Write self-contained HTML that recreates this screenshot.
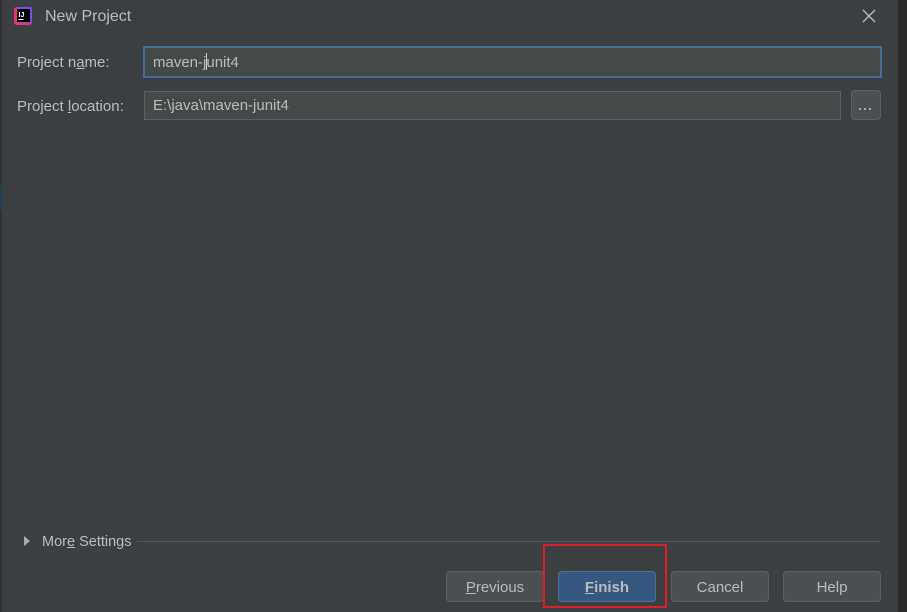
<!DOCTYPE html>
<html><head><meta charset="utf-8"><style>
body{margin:0;width:907px;height:612px;background:#3c3f41;position:relative;overflow:hidden;font-family:"Liberation Sans","Noto Sans CJK SC",sans-serif;color:#bbbbbb;font-size:15px}
.a{position:absolute}
.lbl{font-size:15px;color:#bbbbbb}
.field{background:#45494a;border:1px solid #5e6060;box-sizing:border-box;color:#bbbbbb;padding-left:8px;line-height:28px}
.btn{position:absolute;top:571px;height:31px;border:1px solid #5e6162;border-radius:4px;background:#4c5052;box-sizing:border-box;text-align:center;line-height:31px;color:#bbbbbb;font-size:15px}
u{text-decoration:underline}
</style></head><body>
<div class="a" style="left:0;top:0;width:2px;height:612px;background:#2f3133"></div>
<div class="a" style="left:0;top:185px;width:2px;height:25px;background:#1f4257"></div>
<div class="a" style="left:898px;top:0;width:9px;height:612px;background:#2b2b2b"></div>
<svg class="a" style="left:13px;top:6px" width="22" height="20" viewBox="0 0 22 20">
<rect x="1" y="1" width="18" height="18" rx="3" fill="#e8336b"/><rect x="4" y="1" width="15" height="16" rx="2" fill="#7a4ee0"/>
<rect x="4" y="3" width="13" height="13" fill="#000"/>
<text x="5.5" y="11" font-size="7" fill="#fff" font-family="Liberation Sans" font-weight="bold">IJ</text>
<rect x="5.5" y="13" width="5" height="1" fill="#fff"/></svg>
<div class="a" style="left:45px;top:8px;font-size:16px;color:#bbbbbb">New Project</div>
<svg class="a" style="left:862px;top:9px" width="14" height="14"><path d="M1 1L13 13M13 1L1 13" stroke="#bbbbbb" stroke-width="1.4"/></svg>
<div class="a lbl" style="left:17px;top:54px">Project n<u>a</u>me:</div>
<div class="a field" style="left:143px;top:46px;width:739px;height:32px;border:2px solid #466d94;line-height:29px;padding-left:8px;background:#45494a">maven-junit4</div>
<div class="a" style="left:206px;top:53px;width:1px;height:17px;background:#ccc"></div>
<div class="a lbl" style="left:17px;top:98px">Project <u>l</u>ocation:</div>
<div class="a field" style="left:144px;top:91px;width:697px;height:29px">E:\java\maven-junit4</div>
<div class="a" style="left:851px;top:90px;width:30px;height:30px;border:1px solid #5e6162;border-radius:4px;background:#4c5052;box-sizing:border-box"></div>
<div class="a" style="left:859px;top:108px;width:14px;height:2px;background:repeating-linear-gradient(90deg,#8fb0d0 0 2px,transparent 2px 5px)"></div>
<svg class="a" style="left:23px;top:535px" width="8" height="12"><path d="M1 1L7 6L1 11Z" fill="#aaaaaa"/></svg>
<div class="a lbl" style="left:42px;top:534px;font-size:14.5px">Mor<u>e</u> Settings</div>
<div class="a" style="left:137px;top:541px;width:744px;height:1px;background:#555759"></div>
<div class="btn" style="left:446px;width:98px"><u>P</u>revious</div>
<div class="btn" style="left:558px;width:98px;background:#365880;border-color:#4c709a;font-weight:bold"><u>F</u>inish</div>
<div class="btn" style="left:671px;width:98px">Cancel</div>
<div class="btn" style="left:783px;width:98px">Help</div>
<div class="a" style="left:543px;top:544px;width:124px;height:64px;border:2px solid #d8202a;box-sizing:border-box"></div>
</body></html>
